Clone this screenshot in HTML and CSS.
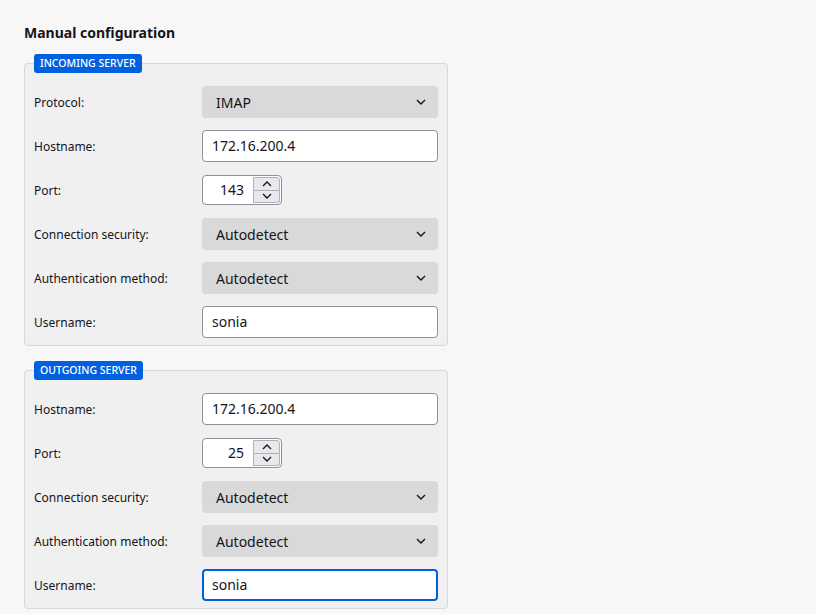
FILE: index.html
```html
<!DOCTYPE html>
<html>
<head>
<meta charset="utf-8">
<link rel="stylesheet" href="styles.css">
</head>
<body>
<div class="page">
  <h1 class="title">Manual configuration</h1>

  <fieldset class="group">
    <legend class="badge">INCOMING SERVER</legend>
    <div class="rows">
      <label class="lbl">Protocol:</label>
      <div class="select"><span>IMAP</span><svg class="chev" width="10" height="6" viewBox="0 0 10 6"><path d="M1 1l4 4 4-4" fill="none" stroke="#15141a" stroke-width="1.4"/></svg></div>

      <label class="lbl">Hostname:</label>
      <div class="input">172.16.200.4</div>

      <label class="lbl">Port:</label>
      <div class="number"><span class="num">143</span><div class="spin"><div class="sb"><svg width="10" height="6" viewBox="0 0 10 6"><path d="M1 5l4-4 4 4" fill="none" stroke="#15141a" stroke-width="1.3"/></svg></div><div class="sb"><svg width="10" height="6" viewBox="0 0 10 6"><path d="M1 1l4 4 4-4" fill="none" stroke="#15141a" stroke-width="1.3"/></svg></div></div></div>

      <label class="lbl">Connection security:</label>
      <div class="select"><span>Autodetect</span><svg class="chev" width="10" height="6" viewBox="0 0 10 6"><path d="M1 1l4 4 4-4" fill="none" stroke="#15141a" stroke-width="1.4"/></svg></div>

      <label class="lbl">Authentication method:</label>
      <div class="select"><span>Autodetect</span><svg class="chev" width="10" height="6" viewBox="0 0 10 6"><path d="M1 1l4 4 4-4" fill="none" stroke="#15141a" stroke-width="1.4"/></svg></div>

      <label class="lbl">Username:</label>
      <div class="input">sonia</div>
    </div>
  </fieldset>

  <fieldset class="group">
    <legend class="badge">OUTGOING SERVER</legend>
    <div class="rows">
      <label class="lbl">Hostname:</label>
      <div class="input">172.16.200.4</div>

      <label class="lbl">Port:</label>
      <div class="number"><span class="num">25</span><div class="spin"><div class="sb"><svg width="10" height="6" viewBox="0 0 10 6"><path d="M1 5l4-4 4 4" fill="none" stroke="#15141a" stroke-width="1.3"/></svg></div><div class="sb"><svg width="10" height="6" viewBox="0 0 10 6"><path d="M1 1l4 4 4-4" fill="none" stroke="#15141a" stroke-width="1.3"/></svg></div></div></div>

      <label class="lbl">Connection security:</label>
      <div class="select"><span>Autodetect</span><svg class="chev" width="10" height="6" viewBox="0 0 10 6"><path d="M1 1l4 4 4-4" fill="none" stroke="#15141a" stroke-width="1.4"/></svg></div>

      <label class="lbl">Authentication method:</label>
      <div class="select"><span>Autodetect</span><svg class="chev" width="10" height="6" viewBox="0 0 10 6"><path d="M1 1l4 4 4-4" fill="none" stroke="#15141a" stroke-width="1.4"/></svg></div>

      <label class="lbl">Username:</label>
      <div class="input focused">sonia</div>
    </div>
  </fieldset>
</div>
</body>
</html>
```

FILE: styles.css
```css
html, body {
  margin: 0;
  padding: 0;
  background: #f7f7f7;
}
body {
  font-family: "Noto Sans", "Open Sans", sans-serif;
  color: #15141a;
}
.page {
  padding: 23px 24px 0;
  width: 424px;
}
.title {
  margin: 0 0 11px;
  font-size: 14px;
  line-height: 20px;
  font-weight: 700;
}
.group {
  margin: 0 0 15px;
  padding: 13px 9px 7px;
  border: 1px solid #d8d8d8;
  border-radius: 4px;
  background: #f0f0f0;
  min-width: 0;
}
.group:last-child {
  margin-bottom: 0;
}
.badge {
  padding: 0 6px;
  height: 19px;
  line-height: 19px;
  background: #0061e0;
  color: #fff;
  font-size: 10.5px;
  font-weight: 500;
  border-radius: 3px;
}
.rows {
  display: grid;
  grid-template-columns: 168px 236px;
  row-gap: 12px;
  align-items: center;
}
.lbl {
  font-size: 12px;
  line-height: 30px;
  padding-top: 2px;
}
.select {
  height: 32px;
  background: #d9d9d9;
  border-radius: 4px;
  display: flex;
  align-items: center;
  justify-content: space-between;
  padding: 0 12px 0 14px;
  font-size: 14px;
}
.chev {
  display: block;
}
.input {
  box-sizing: border-box;
  height: 32px;
  background: #fff;
  border: 1px solid #8f8f9d;
  border-radius: 4px;
  padding: 0 9px;
  font-size: 14px;
  line-height: 30px;
}
.input.focused {
  border: 2px solid #0061e0;
  padding: 0 8px;
  line-height: 28px;
}
.number {
  box-sizing: border-box;
  width: 80px;
  height: 30px;
  background: #fff;
  border: 1px solid #8f8f9d;
  border-radius: 4px;
  display: flex;
  align-items: stretch;
}
.num {
  flex: 1;
  text-align: right;
  padding-right: 9px;
  font-size: 14px;
  line-height: 28px;
}
.spin {
  width: 27px;
  display: flex;
  flex-direction: column;
  padding: 1px 1px 1px 0;
}
.sb {
  flex: 1;
  background: #e9e9ed;
  border: 1px solid #b0b0b8;
  display: flex;
  align-items: center;
  justify-content: center;
}
.sb + .sb {
  border-top: 0;
}
.sb:first-child {
  border-top-right-radius: 3px;
}
.sb:last-child {
  border-bottom-right-radius: 3px;
}
```
